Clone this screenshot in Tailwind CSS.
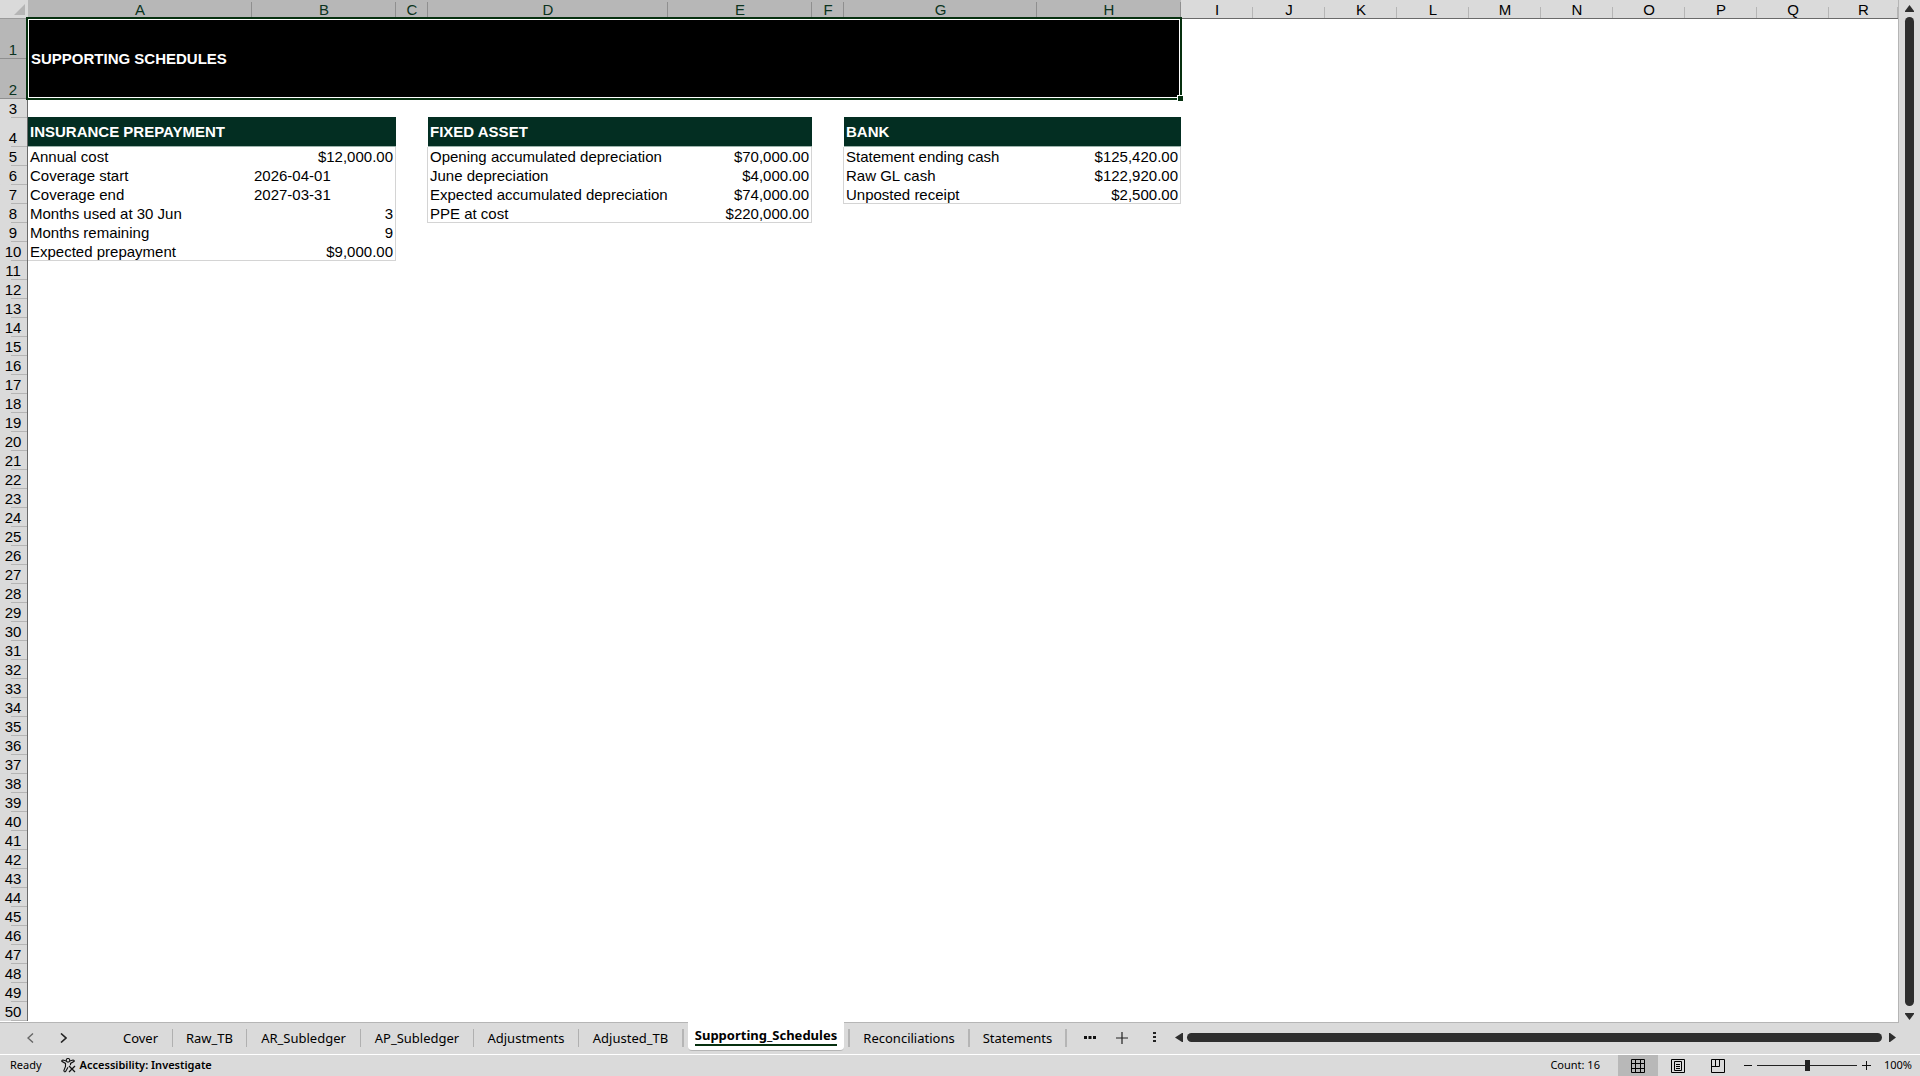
<!DOCTYPE html>
<html lang="en">
<head>
    <meta charset="UTF-8">
    <meta name="viewport" content="width=device-width, initial-scale=1.0">
    <title>Supporting Schedules</title>
    <script src="https://cdn.jsdelivr.net/npm/@tailwindcss/browser@4"></script>
</head>
<body class="h-screen flex flex-col overflow-hidden bg-[#dadada] font-['Liberation_Sans',Arial,sans-serif] text-black">
    <!-- Sheet and vertical scrollbar -->
    <main class="flex-1 min-h-0 flex">
        <div class="flex-1 min-w-0 overflow-hidden relative border-r border-b border-[#b5b5b5] bg-white">
            <table class="w-full table-fixed border-separate border-spacing-0 text-[15px] leading-[17px] whitespace-nowrap">
                <colgroup>
                    <col class="w-[28px]">
                    <col class="w-[224px]">
                    <col class="w-[144px]">
                    <col class="w-[32px]">
                    <col class="w-[240px]">
                    <col class="w-[144px]">
                    <col class="w-[32px]">
                    <col class="w-[193px]">
                    <col class="w-[144px]">
                    <col class="w-[72px]"><col class="w-[72px]"><col class="w-[72px]">
                    <col class="w-[72px]"><col class="w-[72px]"><col class="w-[72px]">
                    <col class="w-[72px]"><col class="w-[72px]"><col class="w-[72px]">
                    <col>
                </colgroup>
                <thead>
                    <tr id="letters" class="h-[19px]">
                        <td class="p-0 bg-[#dadada] border-b border-[#9a9a9a]">
                            <svg class="ml-auto mr-[3px] block" width="11" height="11" viewBox="0 0 11 11"><path d="M11 0v11H0z" fill="#b5b5b5"/></svg>
                        </td>
                    </tr>
                </thead>
                <tbody id="rows">
                    <tr class="h-[40px]">
                        <td colspan="8" rowspan="2" class="p-0 pl-[3px] pb-[2px] bg-black text-white font-bold">SUPPORTING SCHEDULES</td>
                    </tr>
                    <tr class="h-[40px]"></tr>
                    <tr class="h-[19px]"></tr>
                    <tr class="h-[29px] text-white font-bold">
                        <td colspan="2" class="p-0 pl-[2px] pb-px bg-[#032e22] border-b border-[#9db3ac] shadow-[0_-1px_#032e22]">INSURANCE PREPAYMENT</td>
                        <td></td>
                        <td colspan="2" class="p-0 pl-[2px] pb-px bg-[#032e22] border-b border-[#9db3ac] shadow-[0_-1px_#032e22]">FIXED ASSET</td>
                        <td></td>
                        <td colspan="2" class="p-0 pl-[2px] pb-px bg-[#032e22] border-b border-[#9db3ac] shadow-[0_-1px_#032e22]">BANK</td>
                    </tr>
                    <tr class="h-[19px] align-top">
                        <td class="p-0 pt-px pl-[2px]">Annual cost</td>
                        <td class="p-0 pt-px pr-[2px] text-right border-r border-[#d4d4d4]">$12,000.00</td>
                        <td class="p-0 border-r border-[#d4d4d4]"></td>
                        <td class="p-0 pt-px pl-[2px]">Opening accumulated depreciation</td>
                        <td class="p-0 pt-px pr-[2px] text-right border-r border-[#d4d4d4]">$70,000.00</td>
                        <td class="p-0 border-r border-[#d4d4d4]"></td>
                        <td class="p-0 pt-px pl-[2px]">Statement ending cash</td>
                        <td class="p-0 pt-px pr-[2px] text-right border-r border-[#d4d4d4]">$125,420.00</td>
                    </tr>
                    <tr class="h-[19px] align-top">
                        <td class="p-0 pt-px pl-[2px]">Coverage start</td>
                        <td class="p-0 pt-px pl-[2px] border-r border-[#d4d4d4]">2026-04-01</td>
                        <td class="p-0 border-r border-[#d4d4d4]"></td>
                        <td class="p-0 pt-px pl-[2px]">June depreciation</td>
                        <td class="p-0 pt-px pr-[2px] text-right border-r border-[#d4d4d4]">$4,000.00</td>
                        <td class="p-0 border-r border-[#d4d4d4]"></td>
                        <td class="p-0 pt-px pl-[2px]">Raw GL cash</td>
                        <td class="p-0 pt-px pr-[2px] text-right border-r border-[#d4d4d4]">$122,920.00</td>
                    </tr>
                    <tr class="h-[19px] align-top">
                        <td class="p-0 pt-px pl-[2px]">Coverage end</td>
                        <td class="p-0 pt-px pl-[2px] border-r border-[#d4d4d4]">2027-03-31</td>
                        <td class="p-0 border-r border-[#d4d4d4]"></td>
                        <td class="p-0 pt-px pl-[2px]">Expected accumulated depreciation</td>
                        <td class="p-0 pt-px pr-[2px] text-right border-r border-[#d4d4d4]">$74,000.00</td>
                        <td class="p-0 border-r border-[#d4d4d4]"></td>
                        <td class="p-0 pt-px pl-[2px] border-b border-[#d4d4d4]">Unposted receipt</td>
                        <td class="p-0 pt-px pr-[2px] text-right border-r border-b border-[#d4d4d4]">$2,500.00</td>
                    </tr>
                    <tr class="h-[19px] align-top">
                        <td class="p-0 pt-px pl-[2px]">Months used at 30 Jun</td>
                        <td class="p-0 pt-px pr-[2px] text-right border-r border-[#d4d4d4]">3</td>
                        <td class="p-0 border-r border-[#d4d4d4]"></td>
                        <td class="p-0 pt-px pl-[2px] border-b border-[#d4d4d4]">PPE at cost</td>
                        <td class="p-0 pt-px pr-[2px] text-right border-r border-b border-[#d4d4d4]">$220,000.00</td>
                    </tr>
                    <tr class="h-[19px] align-top">
                        <td class="p-0 pt-px pl-[2px]">Months remaining</td>
                        <td class="p-0 pt-px pr-[2px] text-right border-r border-[#d4d4d4]">9</td>
                    </tr>
                    <tr class="h-[19px] align-top">
                        <td class="p-0 pt-px pl-[2px] border-b border-[#d4d4d4]">Expected prepayment</td>
                        <td class="p-0 pt-px pr-[2px] text-right border-r border-b border-[#d4d4d4]">$9,000.00</td>
                    </tr>
                </tbody>
            </table>
            <!-- Selection frame over A1:H2 -->
            <div class="absolute left-[26px] top-[17px] w-[1156px] h-[83px] border-2 border-[#06300f] pointer-events-none">
                <div class="h-full border border-white"></div>
                <div class="absolute -right-[3px] -bottom-[3px] size-[5px] bg-[#06300f] outline outline-white"></div>
            </div>
        </div>
        <div class="w-[21px] flex flex-col items-center pt-[5px] pb-[3px]">
            <button aria-label="Scroll up"><svg class="block" width="9" height="7" viewBox="0 0 9 7"><path d="M4.500 0L9 6v1H0V6z" fill="#2e2e2e"/></svg></button>
            <div class="flex-1 w-[9px] mt-[5px] mb-[7px] rounded-full bg-[#2e2e2e]"></div>
            <button aria-label="Scroll down"><svg class="block" width="9" height="7" viewBox="0 0 9 7"><path d="M0 0h9v1L4.500 7L0 1z" fill="#2e2e2e"/></svg></button>
        </div>
    </main>

    <!-- Sheet tabs -->
    <nav class="h-[31px] pb-[2px] flex font-['Noto_Sans','Open_Sans',sans-serif] text-[13px] leading-[18px]">
        <div class="flex items-center pl-[27px] gap-[26px] pr-[42px]">
            <button aria-label="Previous sheets"><svg class="block" width="7" height="10" viewBox="0 0 7 10"><path d="M6 .5L1 5l5 4.500" fill="none" stroke="#666" stroke-width="1.400"/></svg></button>
            <button aria-label="Next sheets"><svg class="block" width="7" height="10" viewBox="0 0 7 10"><path d="M1 .5L6 5 1 9.500" fill="none" stroke="#222" stroke-width="1.600"/></svg></button>
        </div>
        <div class="flex items-center">
            <button class="w-[64px] text-center border-r border-[#b0b0b0]">Cover</button>
            <button class="w-[74px] text-center border-r border-[#b0b0b0]">Raw_TB</button>
            <button class="w-[114px] text-center border-r border-[#b0b0b0]">AR_Subledger</button>
            <button class="w-[113px] text-center border-r border-[#b0b0b0]">AP_Subledger</button>
            <button class="w-[105px] text-center border-r border-[#b0b0b0]">Adjustments</button>
            <button class="w-[105px] text-center border-r-2 border-[#b5b5b5]">Adjusted_TB</button>
            <button class="relative self-start w-[156px] h-[29px] mx-1 -mt-px flex justify-center items-center rounded-b-[4px] bg-white border-b border-[#b5b5b5] font-bold"><span class="border-b-2 border-[#06300f]">Supporting_Schedules</span></button>
            <button class="w-[122px] text-center border-x-2 border-[#b5b5b5]">Reconciliations</button>
            <button class="w-[97px] text-center border-r-2 border-[#b5b5b5]">Statements</button>
        </div>
        <div class="flex-1 flex items-center pl-[17px] pr-[24px]">
            <button aria-label="More sheets"><svg class="block" width="12" height="3" viewBox="0 0 12 3"><path d="M0 0h3v3H0zM4.500 0h3v3h-3zM9 0h3v3H9z" fill="#111"/></svg></button>
            <button aria-label="New sheet" class="ml-[20px]"><svg class="block" width="12" height="12" viewBox="0 0 12 12"><path d="M6 0v12M0 6h12" stroke="#222" stroke-width="1.200"/></svg></button>
            <button aria-label="Tab options" class="ml-[25px]"><svg class="block" width="3" height="11" viewBox="0 0 3 11"><path d="M0 0h3v2H0zM0 4h3v2H0zM0 8h3v2H0z" fill="#222"/></svg></button>
            <button aria-label="Scroll left" class="ml-[19px]"><svg class="block" width="8" height="9" viewBox="0 0 8 9"><path d="M8 0v9H7L0 4.500L7 0z" fill="#2e2e2e"/></svg></button>
            <div class="flex-1 h-[9px] ml-1 mr-[7px] rounded-full bg-[#2e2e2e]"></div>
            <button aria-label="Scroll right"><svg class="block" width="7" height="9" viewBox="0 0 7 9"><path d="M0 0h1l6 4.500L1 9H0z" fill="#2e2e2e"/></svg></button>
        </div>
    </nav>

    <!-- Status bar -->
    <footer class="h-[22px] flex items-center border-t border-white font-['Noto_Sans','Open_Sans',sans-serif] text-[11px]">
        <span class="pl-[10px]">Ready</span>
        <button class="flex items-center gap-1 ml-[19px] font-semibold">
            <svg width="15" height="15" viewBox="0 0 15 15" fill="none" stroke="#111" stroke-width="1.100"><circle cx="7" cy="2.300" r="1.800"/><path d="M5.200 3L2 2Q.6 2 .8 3.300L4.500 5.400v3L2.800 12.700q.4 1.500 1.800.9L7 9.300M8.800 3L12 2q1.400 0 1.200 1.300L9.500 5.400v1.800"/><path d="M8 8l6 6M14 8l-6 6" stroke-width="1.300"/></svg>
            Accessibility: Investigate
        </button>
        <span class="ml-auto mr-[18px]">Count: 16</span>
        <button aria-label="Normal view" class="w-10 h-full flex items-center justify-center bg-[#b8b8b8]"><svg width="14" height="14" viewBox="0 0 14 14" fill="none" stroke="#000"><path d="M.5 .5h13v13H.5zM4.500 0v14M9.500 0v14M0 4.500h14M0 9.500h14"/></svg></button>
        <button aria-label="Page layout view" class="w-10 h-full flex items-center justify-center"><svg width="14" height="14" viewBox="0 0 14 14" fill="none" stroke="#000"><path d="M.5 .5h13v13H.5zM3.500 2.500h7v9h-7zM5 5.500h4M5 7.500h4M5 9.500h4"/></svg></button>
        <button aria-label="Page break preview" class="w-10 h-full flex items-center justify-center"><svg width="14" height="14" viewBox="0 0 14 14" fill="none" stroke="#000"><path d="M.5 .5h13v13H.5zM4.500 .5v7M.5 7.500h8v-7"/></svg></button>
        <button aria-label="Zoom out" class="ml-[6px]"><svg class="block" width="8" height="9" viewBox="0 0 8 9"><path d="M0 4.500h8" stroke="#111"/></svg></button>
        <div class="relative w-[100px] h-[11px] mx-[5px] flex items-center">
            <div class="w-full h-px bg-[#222]"></div>
            <div class="absolute inset-y-0 left-[48px] w-[5px] bg-[#222]"></div>
            <input type="range" min="0" max="100" value="50" aria-label="Zoom" class="absolute inset-0 w-full opacity-0">
        </div>
        <button aria-label="Zoom in"><svg class="block" width="9" height="9" viewBox="0 0 9 9"><path d="M0 4.500h9M4.500 0v9" stroke="#111"/></svg></button>
        <button class="ml-[13px] mr-[8px]">100%</button>
    </footer>

    <script>
        // Column letters, A-H are inside the selection
        const letters = document.getElementById("letters");
        "ABCDEFGHIJKLMNOPQR".split("").forEach((letter, i) => {
            const th = document.createElement("th");
            th.scope = "col";
            th.className = i < 8
                ? "p-0 font-normal bg-[#b7b7b7] text-[#0b3320] border-b border-[#06300f]"
                : "p-0 font-normal bg-[#dadada] border-b border-[#6a6a6a]";
            const label = document.createElement("div");
            label.className = i < 8
                ? "h-[18px] pt-px bg-linear-to-b from-[#b7b7b7] from-10% to-[#8f8f8f] to-10% bg-[length:1px_100%] bg-right bg-no-repeat"
                : "h-[18px] pt-px bg-linear-to-b from-[#dadada] from-40% to-[#b5b5b5] to-40% bg-[length:1px_100%] bg-right bg-no-repeat";
            label.textContent = letter;
            th.appendChild(label);
            letters.appendChild(th);
        });

        // Row numbers, with empty rows down to 50
        const rows = document.getElementById("rows");
        for (let n = 1; n <= 50; n++) {
            let tr = rows.rows[n - 1];
            if (!tr) {
                tr = document.createElement("tr");
                tr.className = "h-[19px]";
                rows.appendChild(tr);
            }
            const th = document.createElement("th");
            th.scope = "row";
            th.className = n <= 2
                ? "p-0 pt-px pr-px align-bottom font-normal bg-[#b7b7b7] text-[#0b3320] border-r border-b border-[#8f8f8f]"
                : "p-0 py-px pr-px align-bottom font-normal text-black border-r border-[#6a6a6a] bg-[#dadada] bg-linear-to-r from-[#dadada] from-40% to-[#b5b5b5] to-40% bg-[length:100%_1px] bg-bottom bg-no-repeat";
            th.textContent = n;
            tr.prepend(th);
        }
    </script>
</body>
</html>
